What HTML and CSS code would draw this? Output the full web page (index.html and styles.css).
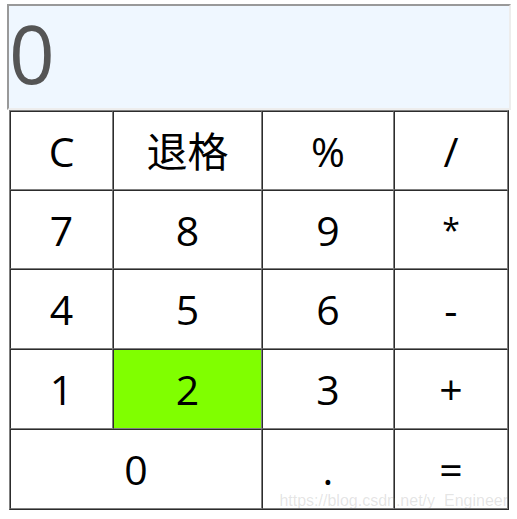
FILE: index.html
```
<!DOCTYPE html>
<html lang="zh-CN">
<head>
<meta charset="utf-8">
<title>计算器</title>
<link rel="stylesheet" href="styles.css">
</head>
<body>
<main class="calculator">
  <input class="display" type="text" value="0" aria-label="结果" readonly>
  <table class="keypad">
    <colgroup>
      <col class="col-first">
      <col class="col-second">
      <col class="col-third">
      <col>
    </colgroup>
    <tbody>
      <tr class="upper"><td><button type="button">C</button></td><td><button type="button">退格</button></td><td><button type="button">%</button></td><td><button type="button">/</button></td></tr>
      <tr class="upper"><td><button type="button">7</button></td><td><button type="button">8</button></td><td><button type="button">9</button></td><td><button type="button" class="star">*</button></td></tr>
      <tr><td><button type="button">4</button></td><td><button type="button">5</button></td><td><button type="button">6</button></td><td><button type="button">-</button></td></tr>
      <tr><td><button type="button">1</button></td><td><button type="button" class="active">2</button></td><td><button type="button">3</button></td><td><button type="button">+</button></td></tr>
      <tr><td colspan="2"><button type="button">0</button></td><td><button type="button">.</button></td><td><button type="button">=</button></td></tr>
    </tbody>
  </table>
  <span class="watermark">https://blog.csdn.net/y_Engineer</span>
</main>
</body>
</html>
```
FILE: styles.css
```
* {
  box-sizing: border-box;
}

body {
  margin: 4px 6px 0 7px;
  background: #fff;
  color: #000;
  font-family: "Open Sans", "Noto Sans CJK SC", sans-serif;
}

.calculator {
  position: relative;
}

.display {
  display: block;
  width: 100%;
  height: 106px;
  padding: 0 0 10px;
  border: 2px solid;
  border-color: #999 #ededed #ededed #999;
  border-radius: 0;
  outline: 0;
  background: #eff7ff;
  color: #555;
  font: 80px/92px "Open Sans", sans-serif;
}

/* Two-tone rules: grey on the outer top/left, dark on the inner side. */
.keypad {
  width: calc(100% - 4px);
  margin: 0 2px;
  table-layout: fixed;
  border-collapse: separate;
  border-spacing: 0;
  border: 1px solid;
  border-color: #808080 #2c2c2c #2c2c2c #808080;
}

.col-first {
  width: 20.7%;
}

.col-second {
  width: 29.9%;
}

.col-third {
  width: 26.5%;
}

td {
  padding: 0;
  border: 1px solid;
  border-color: #2c2c2c #808080 #808080 #2c2c2c;
}

button {
  display: block;
  width: 100%;
  height: 78px;
  padding: 0;
  border: 0;
  background: transparent;
  color: inherit;
  font-family: inherit;
  font-size: 41px;
  line-height: 76px;
  text-align: center;
}

.upper button {
  height: 77px;
}

button.active {
  background: #80ff00;
}

button.star {
  font-size: 32px;
}

.watermark {
  position: absolute;
  right: 3px;
  bottom: 0;
  color: rgba(120, 120, 120, 0.2);
  font: 16px/18px "Liberation Sans", sans-serif;
  pointer-events: none;
}
```
